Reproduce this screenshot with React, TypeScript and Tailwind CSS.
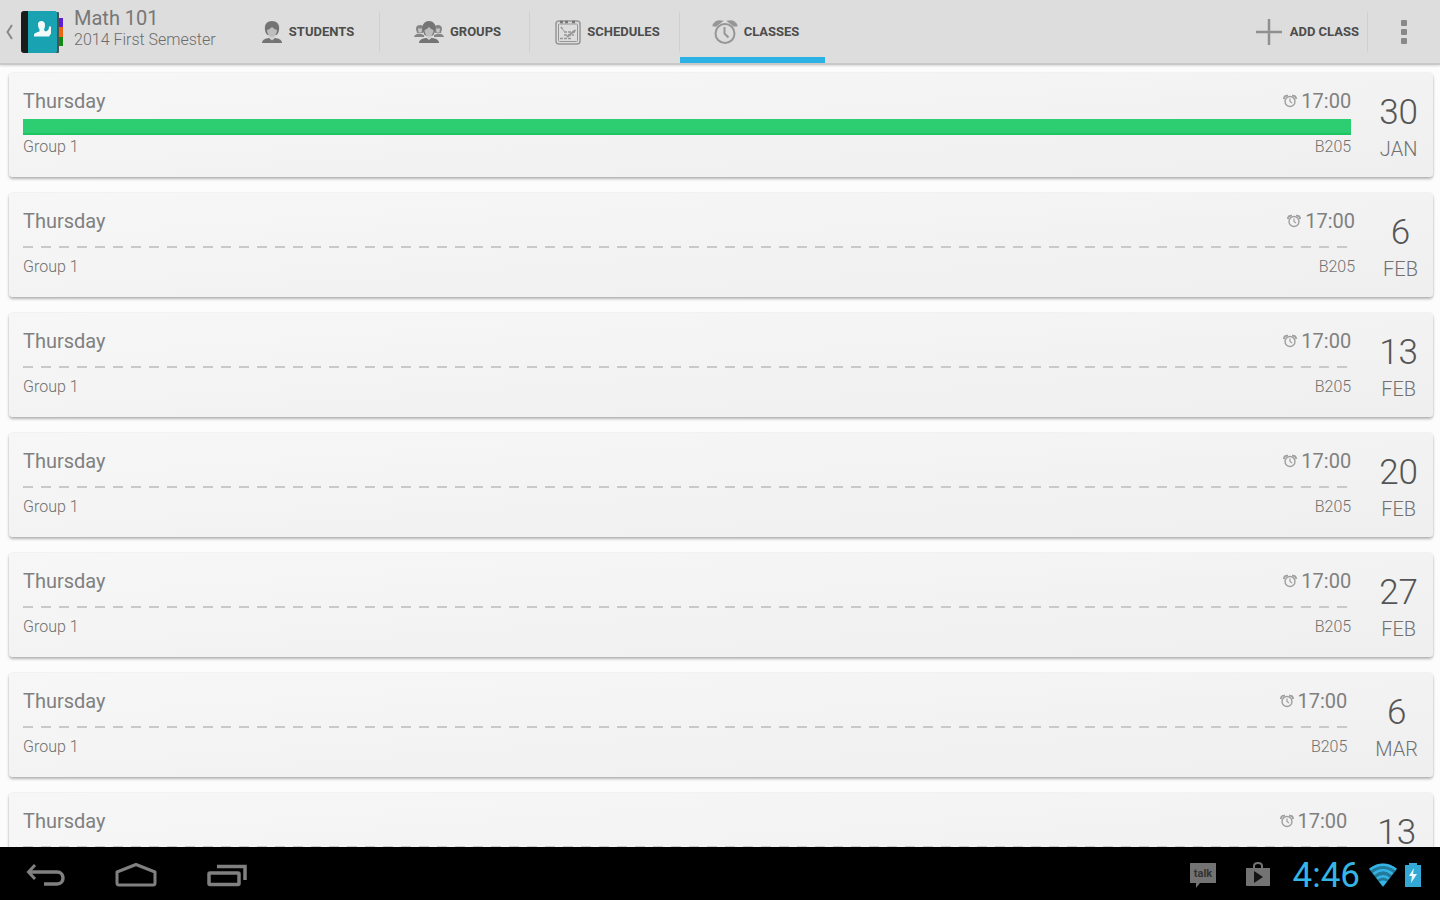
import type { ReactNode } from 'react';

type ClassItem = { day: string; date: string; month: string; done?: boolean };

const classes: ClassItem[] = [
  { day: 'Thursday', date: '30', month: 'JAN', done: true },
  { day: 'Thursday', date: '6', month: 'FEB' },
  { day: 'Thursday', date: '13', month: 'FEB' },
  { day: 'Thursday', date: '20', month: 'FEB' },
  { day: 'Thursday', date: '27', month: 'FEB' },
  { day: 'Thursday', date: '6', month: 'MAR' },
  { day: 'Thursday', date: '13', month: 'MAR' },
];

function AlarmIcon({ className }: { className: string }) {
  return (
    <svg viewBox="0 0 26 26" className={className} fill="none" stroke="currentColor" aria-hidden="true">
      <circle cx="13" cy="14.500" r="9.500" strokeWidth="2" />
      <path d="M1.500 7.500C2 4 5 2 9 2.500L3 7M24.500 7.500C24 4 21 2 17 2.500L23 7" strokeWidth="2.200" />
      <path d="M12.500 8v6.500l4 4" strokeWidth="2" />
    </svg>
  );
}

function SmallAlarmIcon() {
  return (
    <svg viewBox="0 0 14 14" className="h-3.5 w-3.5 text-[#a0a0a0]" fill="none" stroke="currentColor" aria-hidden="true">
      <circle cx="7" cy="7.500" r="5" strokeWidth="1.400" />
      <path d="M0.800 5C1 2.500 2.500 1.500 5 1.700M13.200 5C13 2.500 11.500 1.500 9 1.700" strokeWidth="1.800" />
      <path d="M7 4.500v3l2 1.500" strokeWidth="1.200" />
    </svg>
  );
}

function StudentIcon() {
  return (
    <svg viewBox="0 0 22 24" className="h-6 w-[22px]" aria-hidden="true">
      <path d="M1 23c0-3 3-4.500 7-5h6c4 .5 7 2 7 5z" fill="#747474" />
      <path d="M7 14h8l-1 4-3 2.500-3-2.500z" fill="#d0d0d0" />
      <path d="M4 10C3 4 6.500 1 11 1s8 3 7 9c-.5 3-1.500 4-2.500 5h-9C5.500 14 4.500 13 4 10z" fill="#747474" />
      <path d="M6 10c2-.5 4-2 5-3 1 1 3 2.500 5 3-.3 4-2.500 7-5 7s-4.700-3-5-7z" fill="#bdbdbd" />
    </svg>
  );
}

function GroupsIcon() {
  return (
    <svg viewBox="0 0 30 24" className="h-6 w-[30px]" aria-hidden="true">
      <g fill="#858585">
        <path d="M2 9c0-3 1.500-4 4-4s4 1.500 4 4l-1 4H3zM20 9c0-3 1.500-4 4-4s4 1.500 4 4l-1 4h-6z" />
        <path d="M0 17c1-3 3-3 6-3.500l4 1.500v2zM30 17c-1-3-3-3-6-3.500L20 15v2z" />
      </g>
      <path d="M4 8.500h4l-.5 4h-3zM22 8.500h4l-.5 4h-3z" fill="#c5c5c5" />
      <path d="M5 23c0-3 3-4.500 7-5h6c4 .5 7 2 7 5z" fill="#747474" />
      <path d="M12 16h6l-1 2.500-2 1.500-2-1.500z" fill="#cfcfcf" />
      <path d="M8.500 9C8 4 11 1 15 1s7 3 6.500 8c-.5 3-1.500 5-2.500 6.500h-8C10 14 9 12 8.500 9z" fill="#747474" />
      <path d="M10.500 10c2-.5 3.500-2 4.500-3 1 1 2.500 2.500 4.500 3-.2 4-2 6.500-4.500 6.500s-4.300-2.500-4.500-6.500z" fill="#bdbdbd" />
    </svg>
  );
}

function ScheduleIcon() {
  return (
    <svg viewBox="0 0 26 26" className="h-[26px] w-[26px]" fill="none" stroke="#969696" aria-hidden="true">
      <rect x="1" y="2" width="24" height="23" rx="3" strokeWidth="1.500" />
      <rect x="3.500" y="5" width="19" height="17.500" rx="1" strokeWidth="1" />
      <path d="M5 3h3M10 3h3M17 3h3" stroke="#777" strokeWidth="2.500" />
      <path d="M9 13h11M9 16h10M5 19.500h11M6 8l3 4" strokeWidth="1.500" strokeDasharray="3 1" />
      <path d="M12 18L20.500 11" strokeWidth="2" />
    </svg>
  );
}

function AppIcon() {
  return (
    <svg viewBox="0 0 44 46" className="h-[46px] w-11" aria-hidden="true">
      <rect x="34" y="9" width="9" height="9" fill="#5d1fd1" />
      <rect x="34" y="18" width="9" height="10" fill="#ec6710" />
      <rect x="34" y="28" width="9" height="9" fill="#128a16" />
      <rect x="34" y="3" width="5" height="41" rx="1" fill="#4b5556" />
      <path d="M4 2h8v42H4c-2 0-3-1-3-3V5c0-2 1-3 3-3z" fill="#1b1b1b" />
      <path d="M8 2h27c1 0 2 1 2 2v38c0 1-1 2-2 2H8z" fill="#18a2b2" />
      <path d="M18 15c0-2 1.500-3 3.500-3s3.500 1.500 3.500 4-.5 3-1 4.500l1 2c3-.5 4-2 4-5h2v7l-2 3H14v-2c1-2 3-2 5.500-3v-2c-1-1.500-1.500-3-1.500-5.500z" fill="#f4fafa" />
    </svg>
  );
}

function Tab({ icon, label, active, last }: { icon: ReactNode; label: string; active?: boolean; last?: boolean }) {
  return (
    <button
      type="button"
      role="tab"
      aria-selected={!!active}
      className={`flex h-full flex-col ${last ? 'w-[145px]' : 'w-[150px]'}`}
    >
      <span className={`mt-3 flex h-10 w-full items-center justify-center gap-1.5 pl-1.5 ${last ? '' : 'border-r border-[#d0d0d0]'}`}>
        {icon}
        <span className="text-[13px] leading-4 font-bold text-[#4c4c4c]">{label}</span>
      </span>
      <span className={`mt-auto h-1.5 w-full ${active ? 'bg-[#2bb1e3]' : ''}`} />
    </button>
  );
}

function ClassCard({ item }: { item: ClassItem }) {
  return (
    <li className="flex h-[104px] shrink-0 gap-7 rounded-sm bg-linear-to-br from-[#f7f7f7] to-[#efefef] pr-[15px] pl-3.5 shadow-[0_2px_3px_rgba(0,0,0,0.28),0_0_2px_rgba(0,0,0,0.12)]">
      <div className="min-w-0 flex-1 pt-4">
        <div className="flex items-center justify-between text-xl leading-6 text-[#808080]">
          <h2>{item.day}</h2>
          <div className="flex items-center gap-1">
            <SmallAlarmIcon />
            <time>17:00</time>
          </div>
        </div>
        <div className="mt-1.5 flex h-4 items-center">
          {item.done ? (
            <div className="h-4 w-full border-b-2 border-[#1fc463] bg-[#2dce71]" />
          ) : (
            <div className="h-0.5 w-full bg-[repeating-linear-gradient(90deg,#c9c9c9_0px,#c9c9c9_10px,transparent_10px,transparent_18px)]" />
          )}
        </div>
        <div className="mt-0.5 flex justify-between text-base leading-5 font-light text-[#707070]">
          <span>Group 1</span>
          <span>B205</span>
        </div>
      </div>
      <div className="flex flex-col items-center pt-5">
        <span className="text-[35px] leading-10 font-light text-[#555555]">{item.date}</span>
        <span className="mt-1 text-xl leading-6 font-light text-[#707070]">{item.month}</span>
      </div>
    </li>
  );
}

export default function App() {
  return (
    <div className="flex h-screen flex-col overflow-hidden bg-[#fcfcfc] font-[Roboto,'Liberation_Sans',sans-serif]">
      <header className="z-10 flex h-[65px] shrink-0 items-stretch border-b-2 border-[#c8c8c8] bg-[#dddddd] shadow-[0_1px_2px_rgba(0,0,0,0.15)]">
        <button type="button" aria-label="Back" className="flex items-center gap-1.5 pl-1.5">
          <svg viewBox="0 0 8 18" className="h-[18px] w-2" fill="none" stroke="#888" strokeWidth="2" aria-hidden="true">
            <path d="M6 2L1.500 9l4.500 7" />
          </svg>
          <AppIcon />
        </button>
        <div className="w-[160px] pt-2 pl-2.5 whitespace-nowrap">
          <h1 className="text-xl leading-5 text-[#777777]">Math 101</h1>
          <p className="text-base leading-6 font-light text-[#6c6c6c]">2014 First Semester</p>
        </div>
        <div role="tablist" className="ml-1.5 flex">
          <Tab icon={<StudentIcon />} label="STUDENTS" />
          <Tab icon={<GroupsIcon />} label="GROUPS" />
          <Tab icon={<ScheduleIcon />} label="SCHEDULES" />
          <Tab icon={<AlarmIcon className="h-[26px] w-[26px] text-[#969696]" />} label="CLASSES" active last />
        </div>
        <div className="ml-auto flex pt-3">
          <button type="button" className="flex h-10 items-center gap-2 border-r border-[#d0d0d0] pr-2">
            <svg viewBox="0 0 26 26" className="h-[26px] w-[26px]" stroke="#909090" strokeWidth="2.500" aria-hidden="true">
              <path d="M13 0v26M0 13h26" />
            </svg>
            <span className="text-[13px] leading-4 font-bold text-[#4c4c4c]">ADD CLASS</span>
          </button>
          <button type="button" aria-label="More options" className="flex h-10 w-[72px] items-center justify-center">
            <svg viewBox="0 0 8 26" className="h-[26px] w-2" fill="#888" aria-hidden="true">
              <rect x="1" y="1" width="6" height="6" rx="1" />
              <rect x="1" y="10" width="6" height="6" rx="1" />
              <rect x="1" y="19" width="6" height="6" rx="1" />
            </svg>
          </button>
        </div>
      </header>

      <main className="min-h-0 flex-1 overflow-y-auto [scrollbar-width:none]">
        <ul className="flex flex-col gap-4 pt-2 pr-[7px] pl-[9px]">
          {classes.map((item, i) => (
            <ClassCard key={i} item={item} />
          ))}
        </ul>
      </main>

      <footer className="z-10 flex h-[53px] shrink-0 items-center justify-between bg-black pt-0.5">
        <nav className="flex items-center gap-12 pl-[26px]">
          <button type="button" aria-label="Back">
            <svg viewBox="0 0 40 26" className="h-[26px] w-10" fill="none" stroke="#808080" strokeWidth="3.500" aria-hidden="true">
              <path d="M3 10h28c4 0 6 3 6 6s-2 6-6 6H18" />
              <path d="M9 3L2.500 10 9 17" strokeWidth="3" />
            </svg>
          </button>
          <button type="button" aria-label="Home">
            <svg viewBox="0 0 44 26" className="h-[26px] w-11" fill="none" stroke="#808080" strokeWidth="3" strokeLinejoin="round" aria-hidden="true">
              <path d="M3 10L22 2.500 41 10v11c0 1-.5 2-2 2H5c-1.500 0-2-1-2-2z" />
            </svg>
          </button>
          <button type="button" aria-label="Recent apps">
            <svg viewBox="0 0 42 26" className="h-[26px] w-[42px]" fill="none" stroke="#808080" strokeWidth="3.500" strokeLinejoin="round" aria-hidden="true">
              <rect x="3" y="11" width="30" height="11.500" rx="1" />
              <path d="M11 4.500h28V18" strokeLinejoin="miter" />
            </svg>
          </button>
        </nav>
        <div className="flex items-center pr-[18px]">
          <svg viewBox="0 0 28 26" className="h-[26px] w-7" aria-hidden="true">
            <path d="M2 1h24c1 0 1 0 1 1v18c0 1 0 1-1 1H11l-4 5v-5H2c-1 0-1 0-1-1V2c0-1 0-1 1-1z" fill="#737373" />
            <text x="14" y="15" textAnchor="middle" fontSize="11" fontWeight="700" fill="#333">talk</text>
          </svg>
          <svg viewBox="0 0 26 26" className="ml-7 h-[26px] w-[26px]" aria-hidden="true">
            <path d="M9 7V4c0-2 1-3 4-3s4 1 4 3v3" fill="none" stroke="#737373" strokeWidth="2" />
            <path d="M1 6h24v17c0 1-1 1-1 1H2s-1 0-1-1z" fill="#737373" />
            <path d="M9 9l9 6-9 6z" fill="#151515" />
          </svg>
          <time className="ml-[22px] pt-0.5 text-[35px] leading-10 text-[#35b5e5]">4:46</time>
          <svg viewBox="0 0 30 24" className="ml-2 h-6 w-[30px]" fill="none" stroke="#35b5e5" aria-hidden="true">
            <path d="M1 6C9-1 21-1 29 6L15 24z" fill="#237a9b" stroke="none" />
            <path d="M2 6.500C10 0 20 0 28 6.500M5.500 11c6-5 13-5 19 0M9 15.500c4-3 8-3 12 0" strokeWidth="2.500" />
            <path d="M11 18.500c3-1.500 5-1.500 8 0l-4 5z" fill="#35b5e5" stroke="none" />
          </svg>
          <svg viewBox="0 0 18 26" className="ml-1.5 h-[26px] w-[18px]" aria-hidden="true">
            <path d="M5 1h8v2h4v22H1V3h4z" fill="#35a9d5" />
            <path d="M10 6l-5 8h3l-1 7 6-9H9z" fill="#e8faff" />
          </svg>
        </div>
      </footer>
    </div>
  );
}
